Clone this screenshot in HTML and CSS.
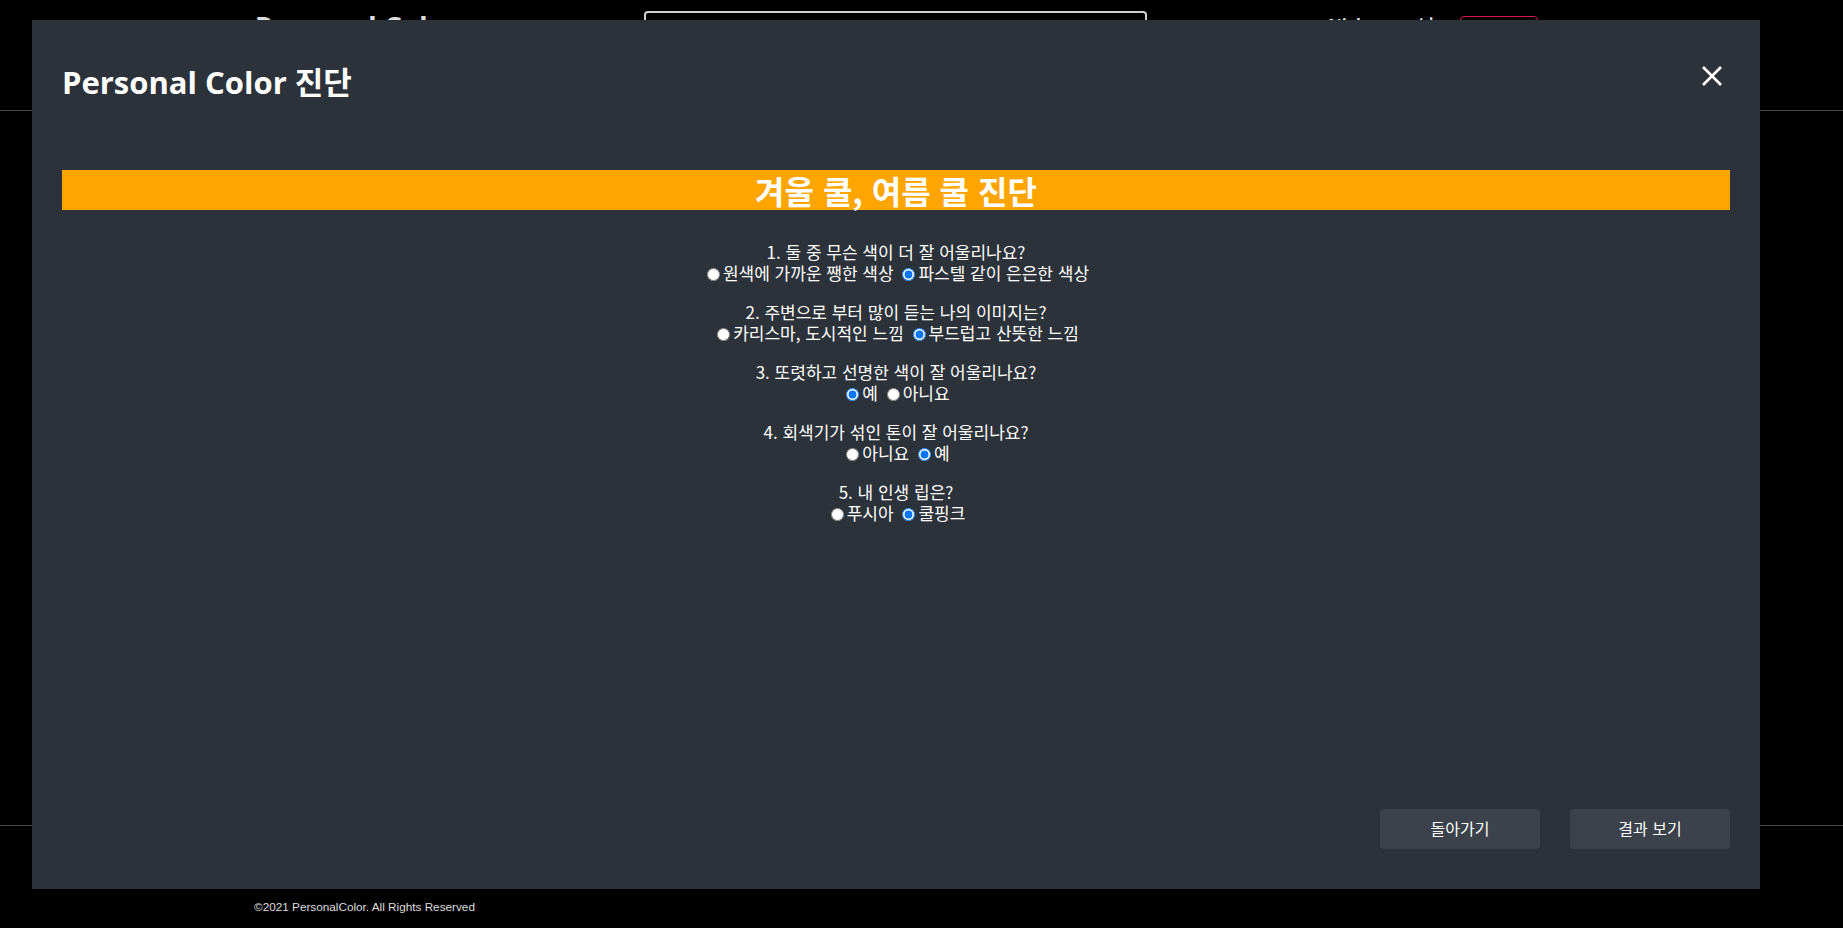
FILE: index.html
```html
<!DOCTYPE html>
<html lang="ko">
<head>
<meta charset="utf-8">
<title>Personal Color</title>
<link rel="stylesheet" href="styles.css">
</head>
<body>
<header class="site-header">
  <div class="logo">Personal Color</div>
  <input class="search" type="text">
  <div class="nav-text">Nickname 님</div>
  <button class="login-btn">Logout</button>
</header>
<main class="site-main"></main>
<footer class="site-footer">
  <p class="copy">©2021 PersonalColor. All Rights Reserved</p>
</footer>

<div class="modal">
  <div class="modal-header">
    <h1 class="modal-title">Personal Color 진단</h1>
    <button class="close-btn" aria-label="close">
      <svg width="20" height="20" viewBox="0 0 20 20"><path d="M1 1 L19 19 M19 1 L1 19" stroke="#fff" stroke-width="2.6" stroke-linecap="butt" fill="none"/></svg>
    </button>
  </div>
  <h2 class="banner">겨울 쿨, 여름 쿨 진단</h2>
  <form class="quiz">
    <p class="q">1. 둘 중 무슨 색이 더 잘 어울리나요?<br><input type="radio" name="q1">원색에 가까운 쨍한 색상 <input type="radio" name="q1" checked>파스텔 같이 은은한 색상</p>
    <p class="q">2. 주변으로 부터 많이 듣는 나의 이미지는?<br><input type="radio" name="q2">카리스마, 도시적인 느낌 <input type="radio" name="q2" checked>부드럽고 산뜻한 느낌</p>
    <p class="q">3. 또렷하고 선명한 색이 잘 어울리나요?<br><input type="radio" name="q3" checked>예 <input type="radio" name="q3">아니요</p>
    <p class="q">4. 회색기가 섞인 톤이 잘 어울리나요?<br><input type="radio" name="q4">아니요 <input type="radio" name="q4" checked>예</p>
    <p class="q">5. 내 인생 립은?<br><input type="radio" name="q5">푸시아 <input type="radio" name="q5" checked>쿨핑크</p>
  </form>
  <div class="modal-footer">
    <button class="btn">돌아가기</button>
    <button class="btn">결과 보기</button>
  </div>
</div>
</body>
</html>
```

FILE: styles.css
```css
html, body {
  margin: 0;
  padding: 0;
  background: #000;
  height: 100%;
  overflow: hidden;
}
body {
  font-family: "Noto Sans", "Noto Sans CJK KR", sans-serif;
  color: #fff;
}
.site-header {
  height: 110px;
  border-bottom: 1px solid #4a4a4a;
  display: flex;
  align-items: flex-start;
  padding-left: 255px;
  box-sizing: content-box;
}
.logo {
  margin-top: 7px;
  font-size: 28px;
  font-weight: 700;
  color: #ddd;
  width: 389px;
  line-height: 40px;
}
.search {
  margin-top: 11px;
  width: 503px;
  height: 40px;
  box-sizing: border-box;
  border: 2px solid #d0d0d0;
  border-radius: 4px;
  background: #000;
}
.nav-text {
  margin-top: 12px;
  margin-left: 181px;
  width: 132px;
  font-size: 17px;
  font-weight: 700;
  color: #ddd;
}
.login-btn {
  margin-top: 16px;
  width: 78px;
  height: 36px;
  border: 1px solid #d6175c;
  border-radius: 4px;
  background: #000;
  color: #d6175c;
}
.site-main {
  height: 714px;
}
.site-footer {
  border-top: 1px solid #4a4a4a;
  padding-left: 254px;
}
.copy {
  margin: 0;
  padding-top: 74px;
  font-family: "Liberation Sans", sans-serif;
  font-size: 11.75px;
  color: #ddd;
}

.modal {
  position: fixed;
  left: 32px;
  top: 20px;
  width: 1728px;
  height: 869px;
  box-sizing: border-box;
  background: #2c323a;
  padding: 0 30px 40px;
  display: flex;
  flex-direction: column;
}
.modal-header {
  height: 150px;
  box-sizing: border-box;
  padding-top: 42px;
  display: flex;
  justify-content: space-between;
  align-items: flex-start;
}
.modal-title {
  margin: 0;
  font-family: "Open Sans", "Noto Sans CJK KR", sans-serif;
  font-size: 31px;
  font-weight: 700;
  line-height: 40px;
  color: #fff;
}
.close-btn {
  margin: 4px 8px 0 0;
  padding: 0;
  width: 20px;
  height: 20px;
  border: 0;
  background: none;
  display: flex;
}
.banner {
  margin: 0;
  height: 40px;
  background: #ffa500;
  color: #fff;
  text-align: center;
  font-family: "Noto Sans CJK KR", sans-serif;
  font-size: 32px;
  font-weight: 700;
  line-height: 40px;
}
.quiz {
  margin-top: 31px;
  text-align: center;
  font-family: "Noto Sans CJK KR", sans-serif;
  font-size: 17px;
  line-height: 21px;
}
.q {
  margin: 0 0 18px;
}
.q input {
  margin: 3px 3px 0 4px;
  vertical-align: -1px;
}
.modal-footer {
  margin-top: auto;
  display: flex;
  justify-content: flex-end;
  gap: 30px;
}
.btn {
  width: 160px;
  height: 40px;
  padding: 0 0 2px;
  border: 0;
  border-radius: 4px;
  background: #3b424b;
  color: #fff;
  font-family: "Noto Sans CJK KR", sans-serif;
  font-size: 16px;
}
```
